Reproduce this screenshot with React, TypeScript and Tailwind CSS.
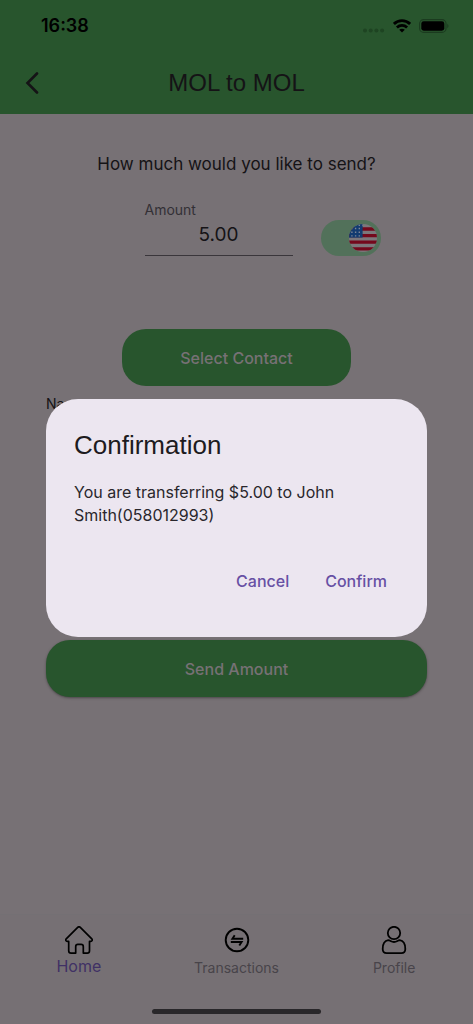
import { useState, type ReactNode } from 'react'

function StatusBar() {
  return (
    <div className="flex h-[52px] items-center justify-between pl-[41px] pr-6 text-black">
      <span className="text-lg font-semibold">16:38</span>
      <div className="flex items-center gap-2">
        <svg width="22" height="14" viewBox="0 0 22 14" fill="#1e4422" aria-hidden>
          <circle cx="2" cy="11.5" r="2" />
          <circle cx="7.7" cy="11.5" r="2" />
          <circle cx="13.4" cy="11.5" r="2" />
          <circle cx="19.1" cy="11.5" r="2" />
        </svg>
        <svg width="18" height="14" viewBox="0 0 18 14" fill="none" stroke="currentColor" strokeWidth="2.8" aria-hidden>
          <path d="M.9 4.900C5.500.4 12.500.4 17.100 4.900" />
          <path d="M3.900 8.400c2.900-2.700 7.300-2.700 10.200 0" />
          <path d="M6.200 10.700c1.600-1.400 4-1.400 5.600 0L9 13.600z" fill="currentColor" stroke="none" />
        </svg>
        <svg width="30" height="14" viewBox="0 0 30 14" aria-hidden>
          <rect x=".6" y=".6" width="26.400" height="12.800" rx="4" fill="none" stroke="#1b3b1f" strokeWidth="1.100" />
          <rect x="2.300" y="2.300" width="23" height="9.400" rx="2.400" fill="#000" />
          <path d="M28.300 4.800c1.600.7 1.600 3.700 0 4.400z" fill="#1b3b1f" />
        </svg>
      </div>
    </div>
  )
}

function UsFlag() {
  return (
    <svg width="28" height="28" viewBox="0 0 28 28" aria-hidden>
      <clipPath id="flag-clip">
        <circle cx="14" cy="14" r="14" />
      </clipPath>
      <g clipPath="url(#flag-clip)">
        <rect width="28" height="28" fill="#7c777b" />
        <path d="M0 5h28M0 11.600h28M0 18.200h28M0 24.800h28" stroke="#74091c" strokeWidth="3.300" />
        <rect width="13.600" height="13.600" fill="#123b70" />
        <path
          d="M2.200 4.500h11M2.200 8.200h11M2.200 11.900h11M5.900 1.200h8"
          stroke="#7c8494"
          strokeWidth="1.400"
          strokeDasharray="1.400 2.300"
        />
      </g>
    </svg>
  )
}

function HomeIcon() {
  return (
    <svg width="28" height="28" viewBox="0 0 28 28" fill="none" stroke="currentColor" strokeWidth="1.700" strokeLinejoin="round" aria-hidden>
      <path d="M12.700 1.400a1.900 1.900 0 0 1 2.600 0L26.800 12.900c1 1 .3 2.500-1.100 2.500h-1.200v9.300c0 1.400-.9 2.400-2.300 2.400h-3.900v-6.400c0-1.400-.9-2.300-2.200-2.300h-3.200c-1.300 0-2.200.9-2.200 2.300v6.400H6.100c-1.400 0-2.400-1-2.400-2.400v-9.300H2.300c-1.400 0-2.100-1.500-1.100-2.500z" />
    </svg>
  )
}

function TransferIcon() {
  return (
    <svg width="28" height="28" viewBox="0 0 28 28" fill="none" stroke="currentColor" strokeWidth="1.900" aria-hidden>
      <circle cx="14" cy="14" r="11.300" />
      <path d="M20.200 12.700H9.400l2.300-3.500M7.800 16h10.800l-2.300 3.500" />
    </svg>
  )
}

function ProfileIcon() {
  return (
    <svg width="28" height="28" viewBox="0 0 28 28" fill="none" stroke="currentColor" strokeWidth="1.800" aria-hidden>
      <circle cx="14" cy="7" r="6.200" />
      <path d="M8.300 14.200c-4 .6-5.600 4.200-5.600 8.800 0 2.700 1.400 4.100 4 4.100h14.600c2.600 0 4-1.400 4-4.100 0-4.600-1.600-8.200-5.600-8.800-2 0-2.700 1.800-5.700 1.800s-3.700-1.800-5.700-1.800z" />
    </svg>
  )
}

function NavItem({ label, icon, active = false }: { label: string; icon: ReactNode; active?: boolean }) {
  return (
    <a href="#" className="flex flex-1 flex-col items-center text-black">
      {icon}
      <span className={active ? 'text-base text-[#403165]' : 'pt-1 text-sm text-[#48444a]'}>{label}</span>
    </a>
  )
}

function ConfirmDialog() {
  return (
    <div className="absolute inset-0 flex items-center px-[46px] pt-3">
      <div
        role="dialog"
        aria-labelledby="confirm-title"
        className="w-full rounded-[32px] bg-[#ece6f0] px-7 pt-7 pb-8 text-[#1d1b20]"
      >
        <h2 id="confirm-title" className="font-['Liberation_Sans',sans-serif] text-[26px] leading-9">
          Confirmation
        </h2>
        <p className="mt-[18px] text-base leading-[23px] text-[#29272c]">
          You are transferring $5.00 to John Smith(058012993)
        </p>
        <div className="mt-[30px] flex justify-end gap-3 text-base font-medium text-[#6750a4]">
          <button type="button" className="h-12 px-3">Cancel</button>
          <button type="button" className="h-12 px-3">Confirm</button>
        </div>
      </div>
    </div>
  )
}

export default function App() {
  const [amount, setAmount] = useState('5.00')
  const [usd, setUsd] = useState(true)

  return (
    <div className="relative flex min-h-screen flex-col bg-[#777175] font-['Inter','Liberation_Sans',sans-serif] text-[#151316]">
      <header className="bg-[#28552d]">
        <StatusBar />
        <div className="grid h-[62px] grid-cols-[64px_1fr_64px] items-center">
          <button type="button" aria-label="Back" className="flex justify-center">
            <svg width="14" height="22" viewBox="0 0 14 22" fill="none" stroke="currentColor" strokeWidth="2.600" strokeLinecap="round" aria-hidden>
              <path d="M12 1.500 2.500 11 12 20.500" />
            </svg>
          </button>
          <h1 className="text-center font-['Liberation_Sans',sans-serif] text-2xl">MOL to MOL</h1>
        </div>
      </header>

      <main className="flex flex-1 flex-col items-center px-[46px] pt-[38px]">
        <p className="text-[17px] leading-6">How much would you like to send?</p>

        <div className="flex items-end gap-7 pt-6 pl-[52px]">
          <div className="flex w-[148px] flex-col">
            <label htmlFor="amount" className="text-sm text-[#333035]">Amount</label>
            <input
              id="amount"
              value={amount}
              onChange={(e) => setAmount(e.target.value)}
              className="h-9 w-full border-b border-[#3a363b] bg-transparent pb-1.5 text-center text-[19px] outline-none"
            />
          </div>
          <label className="flex h-9 w-[60px] items-center rounded-full bg-[#52715a] px-1">
            <input
              type="checkbox"
              aria-label="US dollars"
              checked={usd}
              onChange={(e) => setUsd(e.target.checked)}
              className="peer sr-only"
            />
            <span className="peer-checked:ml-auto">
              <UsFlag />
            </span>
          </label>
        </div>

        <button
          type="button"
          className="mt-[73px] h-[57px] w-3/5 rounded-3xl bg-[#28552d] text-base font-medium text-[#777175]"
        >
          Select Contact
        </button>

        <div className="flex w-full flex-col pt-2">
          <label htmlFor="name" className="text-sm">Name</label>
          <input id="name" className="h-9 w-full bg-transparent outline-none" />
        </div>

        <button
          type="button"
          className="mt-[190px] h-[57px] w-full rounded-3xl bg-[#28552d] text-base font-medium text-[#777175] shadow-sm shadow-black/30"
        >
          Send Amount
        </button>
      </main>

      <footer className="border-t border-[#747074] bg-[#767074]">
        <nav className="flex h-[94px] pt-[11px]">
          <NavItem label="Home" icon={<HomeIcon />} active />
          <NavItem label="Transactions" icon={<TransferIcon />} />
          <NavItem label="Profile" icon={<ProfileIcon />} />
        </nav>
        <div className="flex justify-center pb-[10px]">
          <div className="h-[5px] w-[169px] rounded-full bg-[#29272a]" />
        </div>
      </footer>

      <ConfirmDialog />
    </div>
  )
}
